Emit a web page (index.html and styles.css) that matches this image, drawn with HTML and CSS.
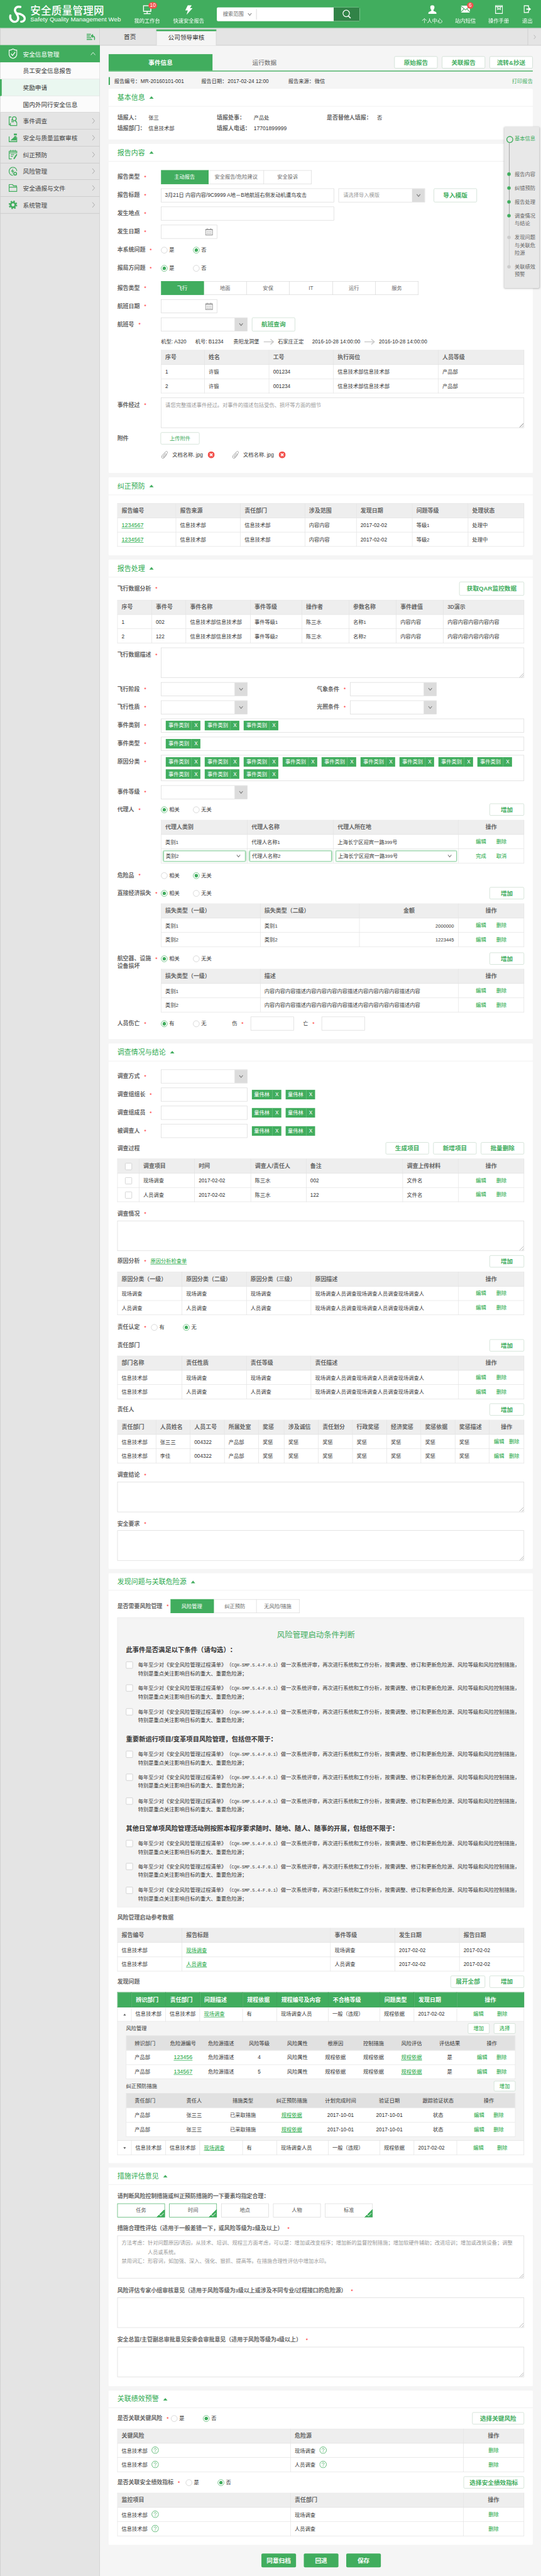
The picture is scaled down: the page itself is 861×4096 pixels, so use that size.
FILE: index.html
```html
<!DOCTYPE html>
<html lang="zh-CN">
<head>
<meta charset="utf-8">
<title>安全质量管理网</title>
<link rel="stylesheet" href="styles.css">
</head>
<body>
<div class="frame">
<div class="page">
  <svg class="defs" width="0" height="0">
    <symbol id="chev" viewBox="0 0 12 8"><path d="M2 1.500 6 6.500 10 1.500" fill="none" stroke="#777" stroke-width="1.500"/></symbol>
    <symbol id="right" viewBox="0 0 8 14"><path d="M1.500 1 6.500 7 1.500 13" fill="none" stroke="#999" stroke-width="1.100"/></symbol>
    <symbol id="cal" viewBox="0 0 18 18"><path d="M1 3.500h16v13H1zM1 4.500h16M5 1v3M13 1v3" fill="none" stroke="#999" stroke-width="1.600"/><path d="M4 8h2v2H4zM8 8h2v2H8zM12 8h2v2h-2zM4 12h2v2H4zM8 12h2v2H8zM12 12h2v2h-2z" fill="#999"/></symbol>
    <symbol id="arrow" viewBox="0 0 25 14"><path d="M0 7h22M16 1l7 6-7 6" fill="none" stroke="#ccc" stroke-width="2.200"/></symbol>
    <symbol id="clip" viewBox="0 0 20 20"><path d="M13 6 7 13.500c-1 1.500 1 3 2.200 1.600L16.500 6c2-3-1.500-5.500-4-3L4 12.500c-2.500 4 2 7.500 5 4.500l6.500-8" fill="none" stroke="#999" stroke-width="1.300"/></symbol>
    <symbol id="del" viewBox="0 0 16 16"><circle cx="8" cy="8" r="8" fill="#f2504b"/><path d="M5 5l6 6M11 5l-6 6" stroke="#fff" stroke-width="2.400"/></symbol>
    <symbol id="help" viewBox="0 0 17 17"><circle cx="8.500" cy="8.500" r="7.700" fill="none" stroke="#41ad5e" stroke-width="1.200"/><path d="M6 7c0-3.500 5-3.300 5-.4 0 1.900-2.500 1.900-2.500 4M8.500 12v1.500" fill="none" stroke="#41ad5e" stroke-width="1.200"/></symbol>
  </svg>
  <header class="top">
    <div class="brand">
      <svg width="41" height="40" viewBox="0 0 41 40"><g fill="none" stroke="#fff" stroke-linecap="round"><path d="M27 3C19 1 13 6 15 13c2 6 8 9 7 17-1 7-8 9-13 6-5-3-6-8-5-13" stroke-width="5"/><path d="M20 18c10 1 18 6 17 13-1 4-4 6-8 6" stroke-width="5"/></g></svg>
      <div><b>安全质量管理网</b><span>Safety Quality Management Web</span></div>
    </div>
    <div class="ti w80"><svg width="20" height="21" viewBox="0 0 20 21"><path d="M1.500 1h17v13h-17zM10 14v5M2 19.500h16" fill="none" stroke="#fff" stroke-width="2.200"/></svg>我的工作台<i class="badge">10</i></div>
    <div class="ti w112"><svg width="18" height="22" viewBox="0 0 18 22"><path d="M7 0h9l-4 7h6L4 22l3-10H1z" fill="#fff"/></svg>快速安全报告</div>
    <div class="search"><span>搜索范围</span><svg width="12" height="8"><use href="#chev"/></svg><i></i><div class="go"><svg width="24" height="24" viewBox="0 0 24 24"><circle cx="11" cy="10" r="7.500" fill="none" stroke="#fff" stroke-width="1.800"/><path d="M16 16l5 5" stroke="#fff" stroke-width="2.400"/></svg></div></div>
    <div class="ti w77 first"><svg width="20" height="20" viewBox="0 0 20 20"><path d="M10 0c7 0 5 8 2.500 11v2L18 15.500q1.500 1 1.500 4.500H.5Q.5 16.500 2 15.500L7.500 13v-2C5 8 3 0 10 0z" fill="#fff"/></svg>个人中心</div>
    <div class="ti w77"><svg width="21" height="18" viewBox="0 0 21 18"><path d="M0 1h21v16H0z" fill="#fff"/><path d="M0 2l10.500 9L21 2M0 16l7.500-8M21 16l-7.500-8" fill="none" stroke="#41ad5e" stroke-width="1.500"/></svg>站内短信<i class="badge six">6</i></div>
    <div class="ti w77"><svg width="18" height="20" viewBox="0 0 18 20"><path d="M1 1h16v18H1zM1 3.500h16M6 4v6l3-2 3 2V4" fill="none" stroke="#fff" stroke-width="1.700"/></svg>操作手册</div>
    <div class="ti w55"><svg width="17" height="18" viewBox="0 0 17 18"><path d="M11 5V1H1v16h10v-4" fill="none" stroke="#fff" stroke-width="2"/><path d="M6 7.500h5V4l6 5-6 5v-3.500H6z" fill="#fff"/></svg>退出</div>
  </header>

  <div class="cols">
    <aside class="side">
      <div class="fold"><svg width="20" height="16" viewBox="0 0 20 16"><path d="M0 2h10M0 6h8M0 10h11M0 14h13" stroke="#41ad5e" stroke-width="2.200"/><path d="M18 15c2-6-1-9-5-9" fill="none" stroke="#41ad5e" stroke-width="2.500"/><path d="M9 6l6-5v10z" fill="#41ad5e"/></svg></div>
      <div class="mi on"><svg width="20" height="24" viewBox="0 0 20 24"><path d="M10 1q4 3 9 3v9q0 7-9 10-9-3-9-10V4q5 0 9-3zM5.500 12l3.500 4 6-8" fill="none" stroke="#fff" stroke-width="1.800"/></svg><span>安全信息管理</span><svg class="ar" width="12" height="8" viewBox="0 0 12 8"><path d="M1 7l5-6 5 6" fill="none" stroke="#fff" stroke-width="1.200"/></svg></div>
      <div class="sub">员工安全信息报告</div>
      <div class="sub cur">奖励申请</div>
      <div class="sub last">国内外同行安全信息</div>
      <div class="mi"><svg width="20" height="23" viewBox="0 0 20 23"><path d="M6 2H1v18h3M4 16v6h15v-7M6 9h3M6 13h6" fill="none" stroke="#41ad5e" stroke-width="2"/><circle cx="13" cy="6" r="4.500" fill="none" stroke="#41ad5e" stroke-width="2"/><path d="M15 10l4 5" stroke="#41ad5e" stroke-width="2.500"/></svg><span>事件调查</span><svg class="ar" width="8" height="14"><use href="#right"/></svg></div>
      <div class="mi"><svg width="20" height="20" viewBox="0 0 20 20"><path d="M1 7v12h18V9" fill="none" stroke="#41ad5e" stroke-width="2"/><path d="M12 0h7v4h-7zM13 6h5v2h-5zM4 16l9-8 5 1v7z" fill="#41ad5e"/></svg><span>安全与质量监察审核</span><svg class="ar" width="8" height="14"><use href="#right"/></svg></div>
      <div class="mi"><svg width="20" height="22" viewBox="0 0 20 22"><path d="M1 3h18v5M1 3v18h6M1 7h17M5 0v5M10 0v5M15 0v5M5 11h8M5 15h5" fill="none" stroke="#41ad5e" stroke-width="2"/><path d="M19 10l-7 11" stroke="#41ad5e" stroke-width="3"/></svg><span>纠正预防</span><svg class="ar" width="8" height="14"><use href="#right"/></svg></div>
      <div class="mi"><svg width="20" height="21" viewBox="0 0 20 21"><path d="M10 20A9 9.500 0 1 1 19 10" fill="none" stroke="#41ad5e" stroke-width="1.800"/><path d="M11 3L5 11h4l-2 6 6-8H9z" fill="#41ad5e"/><circle cx="15" cy="16" r="3.200" fill="none" stroke="#41ad5e" stroke-width="2.400"/></svg><span>风险管理</span><svg class="ar" width="8" height="14"><use href="#right"/></svg></div>
      <div class="mi"><svg width="20" height="18" viewBox="0 0 20 18"><path d="M1 17V1h8l2 3h7v3M1 7h18v10H1z" fill="none" stroke="#41ad5e" stroke-width="1.900"/></svg><span>安全通报与文件</span><svg class="ar" width="8" height="14"><use href="#right"/></svg></div>
      <div class="mi"><svg width="20" height="20" viewBox="0 0 20 20"><circle cx="10" cy="10" r="5.500" fill="none" stroke="#41ad5e" stroke-width="4"/><circle cx="10" cy="10" r="8.500" fill="none" stroke="#41ad5e" stroke-width="3" stroke-dasharray="3.340 3.340"/></svg><span>系统管理</span><svg class="ar" width="8" height="14"><use href="#right"/></svg></div>
    </aside>

    <main class="main">
      <div class="tabs"><div class="t1">首页</div><div class="t2">公司领导审核</div><div class="more"><svg width="7" height="11"><use href="#right"/></svg></div></div>
      <div class="content">
        <div class="ptabs"><b>事件信息</b><span>运行数据</span><div class="btns"><a class="btn w100">原始报告</a><a class="btn w100">关联报告</a><a class="btn w100">流转&amp;抄送</a></div></div>
        <div class="meta"><i></i><span class="m1">报告编号：<em>MR-20160101-001</em></span><span class="m2">报告日期：<em>2017-02-24 12:00</em></span><span>报告来源：<em>微信</em></span><a>打印报告</a></div>

        <section class="panel p1">
          <h2>基本信息</h2>
          <div class="info"><b>填报人：</b><span>张三</span><b>填报处事：</b><span>产品处</span><b class="wide">是否替他人填报：</b><span>否</span><b>填报部门：</b><span>信息技术部</span><b>填报人电话：</b><span class="num">17701899999</span></div>
        </section>

        <section class="panel p2">
          <h2>报告内容</h2>
          <div class="row mt20"><label class="req">报告类型</label><div class="seg"><span class="on w110">主动报告</span><span class="w128">安全报告/危险建议</span><span class="w110">安全投诉</span></div></div>
          <div class="row"><label class="req">报告标题</label><div class="inp w400">3月21日 内容内容/9C9999 A地－B地航班右侧发动机遭鸟攻击</div><div class="sel ml10">请选择导入模版<i><svg width="12" height="8"><use href="#chev"/></svg></i></div><a class="btn h32 w100 ml20">导入模版</a></div>
          <div class="row"><label class="req">发生地点</label><div class="inp w400"></div></div>
          <div class="row"><label class="req">发生日期</label><div class="inp date"><svg width="18" height="18"><use href="#cal"/></svg></div></div>
          <div class="row"><label class="req">本系统问题</label><i class="rd"></i><span class="rt">是</span><i class="rd on"></i><span class="rt">否</span></div>
          <div class="row"><label class="req">报局方问题</label><i class="rd on"></i><span class="rt">是</span><i class="rd"></i><span class="rt">否</span></div>
          <div class="row mt14"><label class="req">报告类型</label><div class="seg six"><span class="on">飞行</span><span>地面</span><span>安保</span><span>IT</span><span>运行</span><span>服务</span></div></div>
          <div class="row"><label class="req">航班日期</label><div class="inp date"><svg width="18" height="18"><use href="#cal"/></svg></div></div>
          <div class="row"><label class="req">航班号</label><div class="sel"><i><svg width="12" height="8"><use href="#chev"/></svg></i></div><a class="btn h32 w100 ml10">航班查询</a></div>
          <div class="flight"><span class="f1">机型: A320</span><span class="f2">机号: B1234</span><span>贵阳龙洞堡</span><svg width="25" height="14"><use href="#arrow"/></svg><span class="f3">石家庄正定</span><span>2016-10-28 14:00:00</span><svg width="25" height="14"><use href="#arrow"/></svg><span>2016-10-28 14:00:00</span></div>
          <table class="tb in">
            <colgroup><col width="100"><col width="149"><col width="149"><col width="242"><col></colgroup>
            <tr><th>序号</th><th>姓名</th><th>工号</th><th>执行岗位</th><th>人员等级</th></tr>
            <tr><td>1</td><td>许锻</td><td>001234</td><td>信息技术部信息技术部</td><td>产品部</td></tr>
            <tr><td>2</td><td>许锻</td><td>001234</td><td>信息技术部信息技术部</td><td>产品部</td></tr>
          </table>
          <div class="row tall"><label class="req">事件经过</label><div class="ta">请您完整描述事件经过。对事件的描述包括受伤、损坏等方面的细节</div></div>
          <div class="row h28"><label>附件</label><a class="btn w90 thin">上传附件</a></div>
          <div class="files"><svg width="20" height="20"><use href="#clip"/></svg><span>文档名称. jpg</span><svg width="16" height="16"><use href="#del"/></svg><svg class="second" width="20" height="20"><use href="#clip"/></svg><span>文档名称. jpg</span><svg width="16" height="16"><use href="#del"/></svg></div>
        </section>

        <section class="panel p3">
          <h2>纠正预防</h2>
          <table class="tb mt19">
            <colgroup><col width="135"><col width="149"><col width="149"><col width="119"><col width="129"><col width="129"><col></colgroup>
            <tr><th>报告编号</th><th>报告来源</th><th>责任部门</th><th>涉及范围</th><th>发现日期</th><th>问题等级</th><th>处理状态</th></tr>
            <tr><td><u class="num">1234567</u></td><td>信息技术部</td><td>信息技术部</td><td>内容内容</td><td>2017-02-02</td><td>等级<s>1</s></td><td>处理中</td></tr>
            <tr><td><u class="num">1234567</u></td><td>信息技术部</td><td>信息技术部</td><td>内容内容</td><td>2017-02-02</td><td>等级<s>2</s></td><td>处理中</td></tr>
          </table>
        </section>

        <section class="panel p4">
          <h2>报告处理</h2>
          <div class="row"><label class="req">飞行数据分析</label><a class="btn h32 w150 end">获取QAR监控数据</a></div>
          <table class="tb">
            <colgroup><col width="79"><col width="79"><col width="149"><col width="119"><col width="109"><col width="109"><col width="109"><col></colgroup>
            <tr><th>序号</th><th>事件号</th><th>事件名称</th><th>事件等级</th><th>操作者</th><th>参数名称</th><th>事件峰值</th><th><s>3D</s>演示</th></tr>
            <tr><td>1</td><td>002</td><td>信息技术部信息技术部</td><td>事件等级<s>1</s></td><td>陈三水</td><td>名称<s>1</s></td><td>内容内容</td><td>内容内容内容内容内容</td></tr>
            <tr><td>2</td><td>122</td><td>信息技术部信息技术部</td><td>事件等级<s>2</s></td><td>陈三水</td><td>名称<s>2</s></td><td>内容内容</td><td>内容内容内容内容内容</td></tr>
          </table>
          <div class="row tall"><label class="req">飞行数据描述</label><div class="ta"></div></div>
          <div class="row"><label class="req">飞行阶段</label><div class="sel"><i><svg width="12" height="8"><use href="#chev"/></svg></i></div><label class="req l2">气象条件</label><div class="sel"><i><svg width="12" height="8"><use href="#chev"/></svg></i></div></div>
          <div class="row"><label class="req">飞行性质</label><div class="sel"><i><svg width="12" height="8"><use href="#chev"/></svg></i></div><label class="req l2">光照条件</label><div class="sel"><i><svg width="12" height="8"><use href="#chev"/></svg></i></div></div>
          <div class="row"><label class="req">事件类别</label><div class="tagbox"><span class="tag">事件类别<i>X</i></span><span class="tag">事件类别<i>X</i></span><span class="tag">事件类别<i>X</i></span></div></div>
          <div class="row"><label class="req">事件类型</label><div class="tagbox"><span class="tag">事件类别<i>X</i></span></div></div>
          <div class="row two"><label class="req">原因分类</label><div class="tagbox"><span class="tag">事件类别<i>X</i></span><span class="tag">事件类别<i>X</i></span><span class="tag">事件类别<i>X</i></span><span class="tag">事件类别<i>X</i></span><span class="tag">事件类别<i>X</i></span><span class="tag">事件类别<i>X</i></span><span class="tag">事件类别<i>X</i></span><span class="tag">事件类别<i>X</i></span><span class="tag">事件类别<i>X</i></span><span class="tag">事件类别<i>X</i></span><span class="tag">事件类别<i>X</i></span><span class="tag">事件类别<i>X</i></span></div></div>
          <div class="row"><label class="req">事件等级</label><div class="sel"><i><svg width="12" height="8"><use href="#chev"/></svg></i></div></div>
          <div class="row h28"><label class="req">代理人</label><i class="rd on"></i><span class="rt">相关</span><i class="rd"></i><span class="rt">无关</span><a class="btn w80 end">增加</a></div>
          <table class="tb in">
            <colgroup><col width="199"><col width="199"><col width="289"><col></colgroup>
            <tr><th>代理人类别</th><th>代理人名称</th><th>代理人所在地</th><th class="c">操作</th></tr>
            <tr><td>类别<s>1</s></td><td>代理人名称<s>1</s></td><td>上海长宁区迎宾一路<s>399</s>号</td><td class="op"><a>编辑</a><a>删除</a></td></tr>
            <tr><td class="ed"><div>类别<s>2</s><svg width="12" height="8"><use href="#chev"/></svg></div></td><td class="ed"><div>代理人名称<s>2</s></div></td><td class="ed"><div>上海长宁区迎宾一路<s>399</s>号<svg width="12" height="8"><use href="#chev"/></svg></div></td><td class="op"><a>完成</a><a>取消</a></td></tr>
          </table>
          <div class="row h28 mt14"><label class="req">危险品</label><i class="rd"></i><span class="rt">相关</span><i class="rd on"></i><span class="rt">无关</span></div>
          <div class="row h28 mt13"><label class="req">直接经济损失</label><i class="rd on"></i><span class="rt">相关</span><i class="rd"></i><span class="rt">无关</span><a class="btn w80 end">增加</a></div>
          <table class="tb in">
            <colgroup><col width="229"><col width="229"><col width="229"><col></colgroup>
            <tr><th>损失类型（一级）</th><th>损失类型（二级）</th><th class="c">金额</th><th class="c">操作</th></tr>
            <tr><td>类别<s>1</s></td><td>类别<s>1</s></td><td class="r"><s>2000000</s></td><td class="op"><a>编辑</a><a>删除</a></td></tr>
            <tr><td>类别<s>2</s></td><td>类别<s>2</s></td><td class="r"><s>1223445</s></td><td class="op"><a>编辑</a><a>删除</a></td></tr>
          </table>
          <div class="row h28 mt13"><label class="multi"><span class="req">航空器、设施</span><br>设备损坏</label><i class="rd on"></i><span class="rt">相关</span><i class="rd"></i><span class="rt">无关</span><a class="btn w80 end">增加</a></div>
          <table class="tb in">
            <colgroup><col width="229"><col width="458"><col></colgroup>
            <tr><th>损失类型（一级）</th><th>描述</th><th class="c">操作</th></tr>
            <tr><td>类别<s>1</s></td><td>内容内容内容描述内容内容内容内容描述内容内容内容内容描述内容</td><td class="op"><a>编辑</a><a>删除</a></td></tr>
            <tr><td>类别<s>2</s></td><td>内容内容内容描述内容内容内容内容描述内容内容内容内容描述内容</td><td class="op"><a>编辑</a><a>删除</a></td></tr>
          </table>
          <div class="row"><label class="req">人员伤亡</label><i class="rd on"></i><span class="rt">有</span><i class="rd"></i><span class="rt">无</span><span class="req hurt">伤</span><div class="inp w100"></div><span class="req dead">亡</span><div class="inp w100"></div></div>
        </section>

        <section class="panel p5">
          <h2>调查情况与结论</h2>
          <div class="row mt19"><label class="req">调查方式</label><div class="sel"><i><svg width="12" height="8"><use href="#chev"/></svg></i></div></div>
          <div class="row"><label class="req">调查组组长</label><div class="inp w200"></div><span class="tag n">童伟林<i>X</i></span><span class="tag n">童伟林<i>X</i></span></div>
          <div class="row"><label class="req">调查组成员</label><div class="inp w200"></div><span class="tag n">童伟林<i>X</i></span><span class="tag n">童伟林<i>X</i></span></div>
          <div class="row"><label class="req">被调查人</label><div class="inp w200"></div><span class="tag n">童伟林<i>X</i></span><span class="tag n">童伟林<i>X</i></span></div>
          <div class="row h28"><label>调查过程</label><div class="btns"><a class="btn w100">生成项目</a><a class="btn w100">新增项目</a><a class="btn w100">批量删除</a></div></div>
          <table class="tb">
            <colgroup><col width="50"><col width="128"><col width="130"><col width="128"><col width="223"><col width="129"><col></colgroup>
            <tr><th class="c"><i class="cb"></i></th><th>调查项目</th><th>时间</th><th>调查人/责任人</th><th>备注</th><th>调查上传材料</th><th class="c">操作</th></tr>
            <tr><td class="c"><i class="cb"></i></td><td>现场调查</td><td>2017-02-02</td><td>陈三水</td><td>002</td><td>文件名</td><td class="op"><a>编辑</a><a>删除</a></td></tr>
            <tr><td class="c"><i class="cb"></i></td><td>人员调查</td><td>2017-02-02</td><td>陈三水</td><td>122</td><td>文件名</td><td class="op"><a>编辑</a><a>删除</a></td></tr>
          </table>
          <div class="row h28 mt13"><label class="req">调查情况</label></div>
          <div class="ta blk"></div>
          <div class="row h28"><label class="req auto">原因分析</label><u class="ml10">原因分析检查单</u><a class="btn w80 end">增加</a></div>
          <table class="tb">
            <colgroup><col width="149"><col width="149"><col width="149"><col width="341"><col></colgroup>
            <tr><th>原因分类（一级）</th><th>原因分类（二级）</th><th>原因分类（三级）</th><th>原因描述</th><th class="c">操作</th></tr>
            <tr><td>现场调查</td><td>现场调查</td><td>现场调查</td><td>现场调查人员调查现场调查人员调查现场调查人</td><td class="op"><a>编辑</a><a>删除</a></td></tr>
            <tr><td>人员调查</td><td>人员调查</td><td>人员调查</td><td>现场调查人员调查现场调查人员调查现场调查人</td><td class="op"><a>编辑</a><a>删除</a></td></tr>
          </table>
          <div class="row h28 mt14"><label class="req duty">责任认定</label><i class="rd"></i><span class="rt">有</span><i class="rd on"></i><span class="rt">无</span></div>
          <div class="row h28 mt14"><label>责任部门</label><a class="btn w80 end">增加</a></div>
          <table class="tb">
            <colgroup><col width="149"><col width="149"><col width="149"><col width="341"><col></colgroup>
            <tr><th>部门名称</th><th>责任性质</th><th>责任等级</th><th>责任描述</th><th class="c">操作</th></tr>
            <tr><td>信息技术部</td><td>现场调查</td><td>现场调查</td><td>现场调查人员调查现场调查人员调查现场调查人</td><td class="op"><a>编辑</a><a>删除</a></td></tr>
            <tr><td>信息技术部</td><td>人员调查</td><td>人员调查</td><td>现场调查人员调查现场调查人员调查现场调查人</td><td class="op"><a>编辑</a><a>删除</a></td></tr>
          </table>
          <div class="row h28"><label>责任人</label><a class="btn w80 end">增加</a></div>
          <table class="tb">
            <colgroup><col width="89"><col width="79"><col width="79"><col width="79"><col width="59"><col width="79"><col width="79"><col width="79"><col width="79"><col width="79"><col width="79"><col></colgroup>
            <tr><th>责任部门</th><th>人员姓名</th><th>人员工号</th><th>所属处室</th><th>奖惩</th><th>涉及诚信</th><th>责任划分</th><th>行政奖惩</th><th>经济奖惩</th><th>奖惩依据</th><th>奖惩描述</th><th class="c">操作</th></tr>
            <tr><td>信息技术部</td><td>张三三</td><td>004322</td><td>产品部</td><td>奖惩</td><td>奖惩</td><td>奖惩</td><td>奖惩</td><td>奖惩</td><td>奖惩</td><td>奖惩</td><td class="op tight"><a>编辑</a><a>删除</a></td></tr>
            <tr><td>信息技术部</td><td>李佳</td><td>004322</td><td>产品部</td><td>奖惩</td><td>奖惩</td><td>奖惩</td><td>奖惩</td><td>奖惩</td><td>奖惩</td><td>奖惩</td><td class="op tight"><a>编辑</a><a>删除</a></td></tr>
          </table>
          <div class="row h28 mt13"><label class="req">调查结论</label></div>
          <div class="ta blk"></div>
          <div class="row h28 mt13"><label class="req">安全要求</label></div>
          <div class="ta blk one"></div>
        </section>

        <section class="panel p6">
          <h2 class="short">发现问题与关联危险源</h2>
          <div class="row mt20"><label class="req long">是否需要风险管理</label><div class="seg"><span class="on w100">风险管理</span><span class="w99">纠正预防</span><span class="w99">无风险/措施</span></div></div>
          <div class="judge">
            <h3>风险管理启动条件判断</h3>
            <h4>此事件是否满足以下条件（请勾选）：</h4>
            <p><i class="cb"></i>每年至少对《安全风险管理过程清单》（<s>CQH-SMP.5.4-F.0.1</s>）做一次系统评审，再次进行系统和工作分析，按需调整、修订和更新危险源、风险等级和风险控制措施，<br>特别是重点关注影响目标的重大、重要危险源；</p>
            <p><i class="cb"></i>每年至少对《安全风险管理过程清单》（<s>CQH-SMP.5.4-F.0.1</s>）做一次系统评审，再次进行系统和工作分析，按需调整、修订和更新危险源、风险等级和风险控制措施，<br>特别是重点关注影响目标的重大、重要危险源；</p>
            <p><i class="cb"></i>每年至少对《安全风险管理过程清单》（<s>CQH-SMP.5.4-F.0.1</s>）做一次系统评审，再次进行系统和工作分析，按需调整、修订和更新危险源、风险等级和风险控制措施，<br>特别是重点关注影响目标的重大、重要危险源；</p>
            <h4>重要新运行项目/变革项目风险管理，包括但不限于：</h4>
            <p><i class="cb"></i>每年至少对《安全风险管理过程清单》（<s>CQH-SMP.5.4-F.0.1</s>）做一次系统评审，再次进行系统和工作分析，按需调整、修订和更新危险源、风险等级和风险控制措施，<br>特别是重点关注影响目标的重大、重要危险源；</p>
            <p><i class="cb"></i>每年至少对《安全风险管理过程清单》（<s>CQH-SMP.5.4-F.0.1</s>）做一次系统评审，再次进行系统和工作分析，按需调整、修订和更新危险源、风险等级和风险控制措施，<br>特别是重点关注影响目标的重大、重要危险源；</p>
            <p><i class="cb"></i>每年至少对《安全风险管理过程清单》（<s>CQH-SMP.5.4-F.0.1</s>）做一次系统评审，再次进行系统和工作分析，按需调整、修订和更新危险源、风险等级和风险控制措施，<br>特别是重点关注影响目标的重大、重要危险源；</p>
            <h4>其他日常单项风险管理活动则按照本程序要求随时、随地、随人、随事的开展，包括但不限于：</h4>
            <p><i class="cb"></i>每年至少对《安全风险管理过程清单》（<s>CQH-SMP.5.4-F.0.1</s>）做一次系统评审，再次进行系统和工作分析，按需调整、修订和更新危险源、风险等级和风险控制措施，<br>特别是重点关注影响目标的重大、重要危险源；</p>
            <p><i class="cb"></i>每年至少对《安全风险管理过程清单》（<s>CQH-SMP.5.4-F.0.1</s>）做一次系统评审，再次进行系统和工作分析，按需调整、修订和更新危险源、风险等级和风险控制措施，<br>特别是重点关注影响目标的重大、重要危险源；</p>
            <p><i class="cb"></i>每年至少对《安全风险管理过程清单》（<s>CQH-SMP.5.4-F.0.1</s>）做一次系统评审，再次进行系统和工作分析，按需调整、修订和更新危险源、风险等级和风险控制措施，<br>特别是重点关注影响目标的重大、重要危险源；</p>
          </div>
          <div class="row h28"><label class="long">风险管理启动参考数据</label></div>
          <table class="tb">
            <colgroup><col width="149"><col width="343"><col width="149"><col width="149"><col></colgroup>
            <tr><th>报告编号</th><th>报告标题</th><th>事件等级</th><th>发生日期</th><th>报告日期</th></tr>
            <tr><td>信息技术部</td><td><u>现场调查</u></td><td>现场调查</td><td>2017-02-02</td><td>2017-02-02</td></tr>
            <tr><td>信息技术部</td><td><u>人员调查</u></td><td>人员调查</td><td>2017-02-02</td><td>2017-02-02</td></tr>
          </table>
          <div class="row h28"><label>发现问题</label><div class="btns"><a class="btn w80">展开全部</a><a class="btn w80">增加</a></div></div>
          <table class="tb green">
            <colgroup><col width="32"><col width="79"><col width="79"><col width="99"><col width="79"><col width="119"><col width="119"><col width="79"><col width="99"><col></colgroup>
            <tr><th></th><th>辨识部门</th><th>责任部门</th><th>问题描述</th><th>规程依据</th><th>规程编号及内容</th><th>不合格等级</th><th>问题类型</th><th>发现日期</th><th class="c">操作</th></tr>
            <tr><td class="c"><i class="up"></i></td><td>信息技术部</td><td>信息技术部</td><td><u>现场调查</u></td><td>有</td><td>现场调查人员</td><td>一般（违规）</td><td>规程依据</td><td>2017-02-02</td><td class="op far"><a>编辑</a><a>删除</a></td></tr>
            <tr><td class="exp" colspan="10">
              <div class="xh">风险管理<div class="btns"><a class="btn sm">增加</a><a class="btn sm">选择</a></div></div>
              <div class="gt g10">
                <div class="gr gh"><span>辨识部门</span><span>危险源编号</span><span>危险源描述</span><span>风险等级</span><span>风险属性</span><span>根原因</span><span>控制措施</span><span>风险评估</span><span>评估结果</span><span>操作</span></div>
                <div class="gr"><span>产品部</span><span><u class="num">123456</u></span><span>危险源描述</span><span>4</span><span>风险属性</span><span>规程依据</span><span>规程依据</span><span><u>规程依据</u></span><span>是</span><span class="gop"><a>编辑</a><a>删除</a></span></div>
                <div class="gr"><span>产品部</span><span><u class="num">134567</u></span><span>危险源描述</span><span>5</span><span>风险属性</span><span>规程依据</span><span>规程依据</span><span><u>规程依据</u></span><span>是</span><span class="gop"><a>编辑</a><a>删除</a></span></div>
              </div>
              <div class="xh">纠正预防措施<div class="btns"><a class="btn sm">增加</a></div></div>
              <div class="gt g8">
                <div class="gr gh"><span>责任部门</span><span>责任人</span><span>措施类型</span><span>纠正预防措施</span><span>计划完成时间</span><span>验证日期</span><span>跟踪验证状态</span><span>操作</span></div>
                <div class="gr"><span>产品部</span><span>张三三</span><span>已采取措施</span><span><u>规程依据</u></span><span>2017-10-01</span><span>2017-10-01</span><span>状态</span><span class="gop"><a>编辑</a><a>删除</a></span></div>
                <div class="gr"><span>产品部</span><span>张三三</span><span>已采取措施</span><span><u>规程依据</u></span><span>2017-10-01</span><span>2017-10-01</span><span>状态</span><span class="gop"><a>编辑</a><a>删除</a></span></div>
              </div>
            </td></tr>
            <tr><td class="c"><i class="down"></i></td><td>信息技术部</td><td>信息技术部</td><td><u>现场调查</u></td><td>有</td><td>现场调查人员</td><td>一般（违规）</td><td>规程依据</td><td>2017-02-02</td><td class="op far"><a>编辑</a><a>删除</a></td></tr>
          </table>
        </section>

        <section class="panel p7">
          <h2 class="short">措施评估意见</h2>
          <div class="row h28 mt12"><label class="long">请判断风险控制措施或纠正预防措施的一下要素均指定合理：</label></div>
          <div class="opts"><span class="ck gb">任务</span><span class="ck gb">时间</span><span>地点</span><span>人物</span><span class="ck">标准</span></div>
          <div class="row h28 mt12"><label class="req long">措施合理性评估（适用于一般差错一下，或风险等级为<s>2</s>级及以上）</label></div>
          <div class="ta blk big"><div>方法考虑：针对问题原因/诱因，从技术、培训、规程三方面考虑，可以是：增加或改变程序；增加新的监督控制措施；增加软硬件辅助；改进培训；增加或改装设备；调整<br>人员或系统。</div><div>禁用词汇：形容词，如加强、深入、强化、狠抓、提高等。在措施合理性评估中增加水印。</div></div>
          <div class="row h28 mt14"><label class="req long">风险评估专家小组审核意见（适用于风险等级为<s>3</s>级以上或涉及不同专业/过程接口的危险源）</label></div>
          <div class="ta blk"></div>
          <div class="row h28 mt14"><label class="req long">安全总监/主管副总审批意见安委会审批意见（适用于风险等级为<s>4</s>级以上）</label></div>
          <div class="ta blk"></div>
        </section>

        <section class="panel p8">
          <h2 class="short">关联绩效预警</h2>
          <div class="row h28"><label class="req k1">是否关联关键风险</label><i class="rd"></i><span class="rt">是</span><i class="rd on"></i><span class="rt">否</span><a class="btn w120 end">选择关键风险</a></div>
          <table class="tb">
            <colgroup><col width="400"><col width="399"><col></colgroup>
            <tr><th>关键风险</th><th>危险源</th><th class="c">操作</th></tr>
            <tr><td>信息技术部<svg class="q" width="17" height="17"><use href="#help"/></svg></td><td>现场调查<svg class="q" width="17" height="17"><use href="#help"/></svg></td><td class="op"><a>删除</a></td></tr>
            <tr><td>信息技术部<svg class="q" width="17" height="17"><use href="#help"/></svg></td><td>人员调查<svg class="q" width="17" height="17"><use href="#help"/></svg></td><td class="op"><a>删除</a></td></tr>
          </table>
          <div class="row h28"><label class="req k2">是否关联安全绩效指标</label><i class="rd"></i><span class="rt">是</span><i class="rd on"></i><span class="rt">否</span><a class="btn w140 end">选择安全绩效指标</a></div>
          <table class="tb">
            <colgroup><col width="400"><col width="399"><col></colgroup>
            <tr><th>监控项目</th><th>责任部门</th><th class="c">操作</th></tr>
            <tr><td>信息技术部<svg class="q" width="17" height="17"><use href="#help"/></svg></td><td>现场调查</td><td class="op"><a>删除</a></td></tr>
            <tr><td>信息技术部<svg class="q" width="17" height="17"><use href="#help"/></svg></td><td>人员调查</td><td class="op"><a>删除</a></td></tr>
          </table>
        </section>
        <div class="foot"><a>同意归档</a><a>回退</a><a>保存</a></div>
      </div>
    </main>
  </div>

  <nav class="anchor">
    <a class="cur">基本信息</a><a>报告内容</a><a>纠错预防</a><a>报告处理</a><a>调查情况与结论</a><a class="off">发现问题与关联危险源</a><a class="off">关联绩效预警</a>
  </nav>
</div>
</div>
</body>
</html>
```
FILE: styles.css
```css
* { box-sizing: border-box; margin: 0; padding: 0; }
body { background: #f5f5f5; font-family: "Liberation Sans", "Noto Sans CJK SC", sans-serif; color: #333; }
i, em { font-style: normal; }
s { text-decoration: none; font-size: 11px; }
.defs { position: absolute; }

.frame { width: 861px; height: 4096px; overflow: hidden; contain: strict; }
.page { position: relative; width: 1250px; height: 5947px; font-size: 12px; line-height: 18px; transform: scale(.6888, .68875); transform-origin: 0 0; white-space: nowrap; text-spacing-trim: space-all; }

/* top bar */
.top { display: flex; height: 65px; background: #41ad5e; color: #fff; padding-right: 4px; }
.brand { display: flex; width: 300px; padding: 13px 0 0 20px; }
.brand > div { margin-left: 9px; }
.brand b { display: block; font-size: 24px; line-height: 24px; font-weight: 500; letter-spacing: .4px; }
.brand span { display: block; font-size: 14px; line-height: 16px; letter-spacing: .15px; }
.ti { position: relative; display: flex; flex-direction: column; align-items: center; justify-content: space-between; height: 57px; padding-top: 12px; }
.ti svg { display: block; }
.w77 { width: 77px; } .w55 { width: 55px; } .w112 { width: 112px; } .first { margin-left: auto; }
.badge { position: absolute; left: 43px; top: 5px; width: 20px; height: 15px; border-radius: 8px; background: #f2504b; text-align: center; font-size: 12px; line-height: 15px; }
.badge.six { left: 42px; width: 15px; }
.search { display: flex; align-items: center; width: 330px; height: 32px; margin: 17px 0 0 9px; padding-left: 14px; background: #fff; border-radius: 3px; overflow: hidden; color: #666; }
.search svg { margin-left: 8px; }
.search i { width: 1px; height: 24px; background: #ccc; margin-left: 9px; }
.go { width: 60px; height: 32px; margin-left: auto; background: #318347; display: flex; align-items: center; justify-content: center; }
.search .go svg { margin: 0; }

.cols { display: flex; height: 5882px; }
.side { width: 231px; background: #e4e4e4; border: 1px solid #c8c8c8; border-width: 1px 1px 0; font-size: 14px; }
.fold { height: 38px; display: flex; align-items: center; justify-content: flex-end; padding-right: 10px; }
.mi { height: 38.75px; border-bottom: 1px solid #c4c4c4; display: flex; align-items: center; padding: 0 10px 0 19px; color: #444; }
.mi span { flex: 1; margin-left: 13px; padding-top: 2px; }
.mi.on { height: 40px; margin: 0 -1px; padding: 0 10px 0 20px; background: #41ad5e; border: 0; color: #fff; }
.sub { height: 38.75px; padding: 2px 0 0 52px; line-height: 37px; background: #fbfbfb; border-bottom: 1px solid #e2e2e2; }
.sub.cur { background: #eaf7f0; border-left: 4px solid #41ad5e; margin-left: -1px; padding-left: 49px; }
.sub.last { border-color: #c4c4c4; }

.main { width: 1019px; background: #f5f5f5; }
.tabs { display: flex; height: 40px; background: #e4e4e4; border-top: 1px solid #c8c8c8; border-bottom: 1px solid #c4c4c4; font-size: 14px; text-align: center; line-height: 38px; }
.t1 { width: 130px; text-align: left; padding-left: 55px; }
.t2 { width: 139px; height: 37px; margin-top: 2px; border: 1px solid #c8c8c8; border-top: 4px solid #41ad5e; border-bottom: 0; background: #f5f5f5; line-height: 30px; }
.more { margin-left: auto; width: 31px; border-left: 1px solid #c8c8c8; display: flex; align-items: center; justify-content: center; }
.content { width: 980px; margin: 20px 0 0 20px; }
.ptabs { display: flex; height: 40px; border-bottom: 2px solid #41ad5e; font-size: 14px; line-height: 40px; text-align: center; align-items: flex-start; }
.ptabs > b { width: 240px; height: 38px; background: #41ad5e; color: #fff; }
.ptabs > span { width: 240px; color: #666; }
.ptabs .btns { margin-top: 5px; }
.btns { display: flex; gap: 10px; margin-left: auto; }
.btn { display: block; height: 28px; line-height: 26px; border: 1px solid #c5d9cb; border-radius: 3px; background: #fff; color: #41ad5e; font-size: 14px; font-weight: 700; text-align: center; }
.btn.h32 { height: 32px; line-height: 30px; }
.btn.thin { font-size: 12px; font-weight: 400; margin-left: -1px; }
.btn.sm { width: 50px; height: 24px; line-height: 22px; font-size: 12px; font-weight: 400; color: #12a53a; }
.w80 { width: 80px; } .w90 { width: 90px; } .w99 { width: 99px; } .w100 { width: 100px; } .w110 { width: 110px; } .w120 { width: 120px; } .w128 { width: 128px; } .w140 { width: 140px; } .w150 { width: 150px; } .w200 { width: 200px; } .w400 { width: 400px; }
.end { margin-left: auto; }
.ml10 { margin-left: 10px; } .ml20 { margin-left: 20px; }
.meta { display: flex; align-items: center; height: 18px; margin: 13px 0 9px; }
.meta i { width: 3px; height: 18px; background: #41ad5e; margin-right: 10px; }
.meta .m1 { width: 201px; } .meta .m2 { width: 201px; }
.meta em { margin-left: 1px; }
.meta a { margin-left: auto; color: #41ad5e; }

/* panels */
.panel { background: #fff; border-radius: 2px; margin-bottom: 10px; padding: 0 20px; }
.p1 { height: 117px; } .p2 { height: 760px; } .p3 { height: 180px; } .p4 { height: 1107px; } .p5 { height: 1213px; } .p6 { height: 1362px; } .p7 { height: 505px; } .p8 { height: 356px; }
h2 { height: 41px; margin: 0 -20px; padding: 0 20px; border-bottom: 1px solid #ebebeb; font-size: 16px; font-weight: 400; line-height: 41px; color: #2fab51; display: flex; align-items: center; }
h2::after { content: ""; margin-left: 10px; border: 5px solid transparent; border-top: 0; border-bottom: 6px solid #41ad5e; }
h2.short { height: 40px; line-height: 40px; }
.info { display: grid; grid-template-columns: 72px 158px 85px 169px 116px 100px; grid-auto-rows: 24px; line-height: 24px; padding-top: 14px; }
.info b, label { font-size: 13px; font-weight: 700; color: #666; }
.num { font-size: 13px; }
.info .num { font-size: 12.500px; }
.row { display: flex; align-items: center; height: 32px; margin-top: 10px; }
.row.h28 { height: 28px; }
.row.mt12 { margin-top: 12px; } .row.mt13 { margin-top: 13px; } .row.mt14 { margin-top: 14px; } .row.mt19 { margin-top: 19px; } .row.mt20 { margin-top: 20px; }
label { width: 101px; flex: none; }
.req::after { content: "*"; color: #f33; margin-left: 10px; font-size: 12px; font-weight: 400; vertical-align: -1px; line-height: 10px; }
label.auto, label.long { width: auto; }
label.duty { width: 78px; } label.k1 { width: 124px; } label.k2 { width: 158px; }
.long + .seg { margin-left: 4px; }
label.l2 { width: 77px; margin-left: 160px; }
label.multi { align-self: flex-start; margin-top: 5px; }
.seg { display: flex; height: 32px; }
.seg span { border: 1px solid #d8d8d8; border-left-width: 0; text-align: center; line-height: 30px; color: #666; }
.seg span.on { background: #41ad5e; border-color: #41ad5e; color: #fff; }
.seg.six span { width: 99.160px; }
.inp, .sel { height: 32px; border: 1px solid #d8d8d8; background: #fff; line-height: 30px; padding-left: 8px; }
.date { width: 130px; display: flex; align-items: center; justify-content: flex-end; padding-right: 9px; }
.sel { display: flex; width: 200px; color: #999; padding-left: 10px; }
.sel i { width: 29px; margin-left: auto; background: #dcdcdc; display: flex; align-items: center; justify-content: center; }
.rd { flex: none; width: 15px; height: 15px; border: 1px solid #c8c8c8; border-radius: 50%; background: #fff; }
.rd.on { border-color: #41ad5e; background: radial-gradient(circle, #41ad5e 0 3.800px, #fff 4.300px); }
.rt { width: 59px; padding-left: 4px; }
.flight { display: flex; align-items: center; height: 18px; margin: 15px 0 9px 101px; }
.flight svg { margin: 0 8px 0 10px; }
.flight .f1 { width: 79px; } .flight .f2 { width: 88px; } .flight .f3 { width: 79px; }
.row.tall { height: 70px; align-items: flex-start; }
.row.tall label { margin-top: 8px; }
.ta { flex: 1; height: 70px; border: 1px solid #d8d8d8; padding: 7px 9px; color: #999; background: linear-gradient(135deg, transparent 47%, #bbb 47% 55%, transparent 55% 72%, #bbb 72% 80%, transparent 80%) right bottom / 10px 10px no-repeat; }
.ta.blk { margin-top: 2px; }
.ta.one { margin-top: 1px; }
.ta.big { height: 99px; line-height: 21px; padding-top: 6px; }
.ta.big div { padding-left: 60px; text-indent: -60px; }
.files { display: flex; align-items: center; height: 20px; margin: 14px 0 0 99px; }
.files span { width: 90px; padding-left: 8px; }
.files .second { margin-left: 38px; }

/* tables */
.tb { width: 940px; margin-top: 10px; border-collapse: collapse; table-layout: fixed; }
.tb.mt19 { margin-top: 19px; }
.tb.in { width: 839px; margin-left: 101px; }
.tb th, .tb td { height: 33px; padding: 0 0 0 9px; border: 1px solid #e2e2e2; text-align: left; font-weight: 400; }
.tb th { background: #eee; color: #666; font-size: 13px; font-weight: 700; }
.tb th s { font-size: 12px; }
.tb td { padding-top: 1px; }
.tb .c { text-align: center; padding-left: 0; }
.tb .r { text-align: right; padding-right: 10px; }
.tb .op { text-align: center; padding: 0; color: #12a53a; }
.op a + a { margin-left: 23px; }
.op.tight a + a { margin-left: 11px; }
.op.far a + a { margin-left: 31px; }
u { color: #12a53a; text-underline-offset: 2px; }
.tb td.ed { padding: 0 4px 0 5px; }
.ed div { display: flex; align-items: center; height: 25px; border: 1px solid #6cc486; box-shadow: 0 0 4px #41ad5e; padding-left: 4px; background: #fff; }
.ed svg { margin-left: auto; margin-right: 9px; }
.cb { display: inline-block; width: 16px; height: 16px; border: 1px solid #c4c4c4; border-radius: 2px; background: #fff; vertical-align: middle; }
.q { vertical-align: middle; margin: -3px 0 0 9px; }

/* tags */
.tagbox { flex: 1; display: flex; flex-wrap: wrap; gap: 6px 10px; align-content: flex-start; height: 100%; border: 1px solid #d8d8d8; padding: 4px 0 0 10px; }
.row.two { height: 60px; align-items: flex-start; }
.two label { margin-top: 7px; }
.tag { display: flex; width: 80px; height: 22px; line-height: 22px; background: #41ad5e; color: #fff; padding-left: 6px; }
.tag i { width: 21px; margin-left: auto; border-left: 1px solid #6fc486; text-align: center; }
.tag.n { width: 68px; margin-left: 10px; padding-left: 5px; }
.hurt { width: 43px; margin-left: 16px; }
.dead { width: 43px; margin-left: 21px; }

/* risk conditions */
.judge { height: 669px; margin: 10px 0; background: #f4f4f4; border: 1px solid #ebebeb; padding: 25px 19px 0; }
.judge h3 { font-size: 18px; font-weight: 400; line-height: 30px; color: #41ad5e; text-align: center; padding-right: 22px; }
.judge h4 { font-size: 15px; line-height: 20px; margin-top: 9px; color: #333; }
.judge p { position: relative; padding-left: 28px; margin-top: 17px; }
.judge p s { font-family: "Liberation Mono", monospace; font-size: 10px; }
.judge h4 + p, .judge h4 + p + p { margin-top: 15.500px; }
.judge p .cb { position: absolute; left: 0; top: 1px; }
.judge p + h4 { margin-top: 24px; }

/* problem list */
.green th { height: 34px; background: #41ad5e; border-color: #379a52; color: #fff; padding-left: 10px; }
.tb.green th { background: #41ad5e; border-color: #379a52; color: #fff; }
.tb.green td { padding: 0 0 0 9px; }
.tb.green td.c, .tb.green td.op { padding: 0; }
.up, .down { display: inline-block; border: 3px solid transparent; vertical-align: middle; }
.up { border-top: 0; border-bottom: 4px solid #555; } .down { border-bottom: 0; border-top: 4px solid #555; }
.tb.green td.exp { height: 275px; padding: 4px 19px 0; background: #f4f4f4; vertical-align: top; }
.xh { display: flex; align-items: center; height: 24px; margin-bottom: 4px; }
.gt { border: 1px solid #e2e2e2; background: #fff; margin-bottom: 4px; }
.gr { display: grid; height: 33px; align-items: center; border-top: 1px solid #e2e2e2; text-align: center; }
.gr.gh { background: #e1e1e1; }
.g10 .gr { grid-template-columns: 87px repeat(8, 88px) 1fr; }
.g8 .gr { grid-template-columns: 100px repeat(6, 112.800px) 1fr; }
.gr span:first-child { text-align: left; padding-left: 19px; }
.gop { color: #12a53a; }
.gop a + a { margin-left: 21px; }

.opts { display: flex; gap: 10px; margin-top: 3px; }
.opts span { position: relative; width: 110px; height: 32px; line-height: 31px; border: 1px solid #d8d8d8; text-align: center; color: #555; }
.opts .gb { border-color: #41ad5e; }
.opts .ck::before { content: ""; position: absolute; right: -1px; bottom: -1px; width: 20px; height: 19px; background: linear-gradient(to bottom right, transparent 50%, #41ad5e 50%); }
.opts .ck::after { content: ""; position: absolute; right: 2px; bottom: 4px; width: 9px; height: 5px; border: solid #fff; border-width: 0 0 1.500px 1.500px; transform: rotate(-45deg); }

.foot { display: flex; justify-content: center; gap: 18px; margin-top: 20px; padding-left: 2px; }
.foot a { width: 80px; height: 32px; line-height: 32px; border-radius: 3px; background: #41ad5e; color: #fff; font-size: 14px; font-weight: 700; text-align: center; }

/* floating section index */
.anchor { position: absolute; left: 1165px; top: 293px; width: 81px; height: 372px; padding: 18px 8px 0 24px; background: #e8e8e8; border-radius: 3px; box-shadow: 0 1px 4px rgba(0, 0, 0, .25); white-space: normal; display: flex; flex-direction: column; gap: 14px; color: #666; }
.anchor::before { content: ""; position: absolute; left: 11px; top: 32px; width: 1px; height: 290px; background: linear-gradient(#888 0 172px, #ccc 172px); }
.anchor a { position: relative; width: 49px; }
.anchor a::before { content: ""; position: absolute; left: -17px; top: 5px; width: 8px; height: 8px; border-radius: 50%; background: #41ad5e; }
.anchor .off::before { background: #ccc; }
.anchor .cur { color: #41ad5e; margin-bottom: 50px; }
.anchor .cur::before { left: -19px; top: 3px; width: 12px; height: 12px; border: 2px solid #41ad5e; background: #e8e8e8; }
```
